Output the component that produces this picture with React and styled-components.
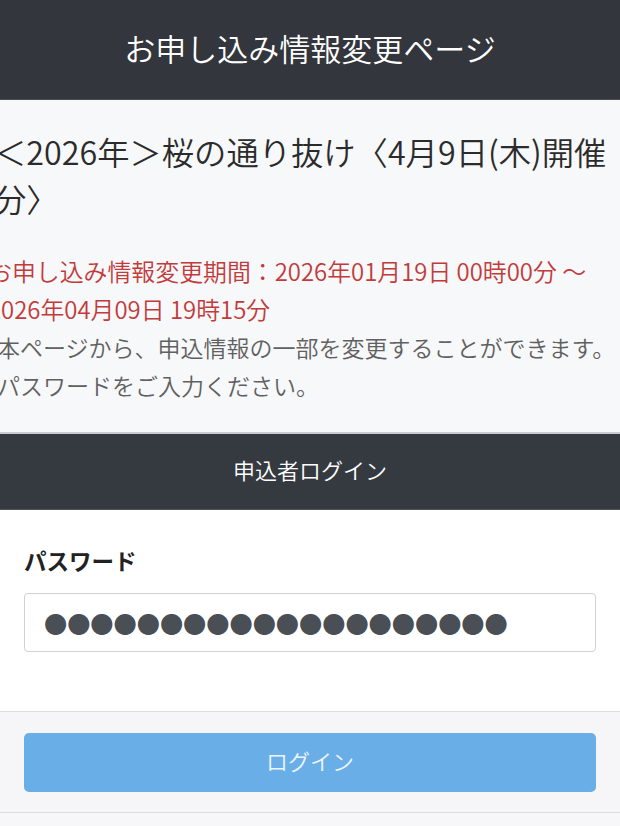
import React from "react";
import styled, { createGlobalStyle } from "styled-components";

const Global = createGlobalStyle`
  html, body { margin: 0; padding: 0; background: #ffffff; }
  body { font-family: "Noto Sans CJK JP", "Noto Sans", sans-serif; overflow: hidden; }
  * { box-sizing: border-box; }
`;

const Page = styled.div`
  width: 620px;
  min-height: 826px;
  display: flex;
  flex-direction: column;
  background: #f7f7f9;
`;

const Header = styled.header`
  height: 100px;
  background: #33363c;
  border-bottom: 1px solid #4a4d52;
  display: flex;
  align-items: center;
  justify-content: center;
  color: #ffffff;
  font-size: 31px;
  font-weight: 350;
  padding-bottom: 5px;
`;

const Info = styled.section`
  background: #f7f8fa;
  padding: 28px 0 28px 0;
`;

const InfoInner = styled.div`
  margin-left: ${(p) => p.$shift}px;
`;

const EventTitle = styled.h1`
  margin: 0 4px 0 0;
  font-size: 32.3px;
  font-weight: 350;
  line-height: 47px;
  color: #2b2b2b;
`;

const Period = styled.p`
  margin: 30px 0 0;
  font-size: 23.9px;
  font-weight: 350;
  line-height: 38px;
  color: #c23b3b;
`;

const Note = styled.p`
  margin: 0;
  font-size: 23px;
  font-weight: 350;
  line-height: 38px;
  color: #606060;
`;

const SectionBar = styled.div`
  height: 78px;
  background: #353a41;
  border-top: 2px solid #c9cbce;
  border-bottom: 1px solid #50545a;
  display: flex;
  align-items: center;
  justify-content: center;
  color: #ffffff;
  font-size: 22px;
  font-weight: 350;
  padding-bottom: 6px;
`;

const Form = styled.div`
  background: #ffffff;
  padding: 34px 24px 59px;
  display: flex;
  flex-direction: column;
  gap: 17px;
`;

const Label = styled.label`
  font-size: 22.5px;
  font-weight: 700;
  line-height: 32px;
  color: #222222;
`;

const PasswordBox = styled.input`
  height: 59px;
  width: 100%;
  border: 1px solid #cfd1d4;
  border-radius: 4px;
  background: #ffffff;
  padding: 0 0 0 19px;
  font-family: "Noto Sans CJK JP", sans-serif;
  font-size: 23.2px;
  color: #4a4e55;
  outline: none;
`;

const Footer = styled.div`
  background: #f6f6f8;
  border-top: 1px solid #dcdcdf;
  border-bottom: 1px solid #dcdcdf;
  padding: 21px 24px 20px;
`;

const Button = styled.button`
  width: 100%;
  height: 59px;
  border: none;
  border-radius: 5px;
  background: #6aaee7;
  color: #eef6fd;
  font-family: "Noto Sans CJK JP", sans-serif;
  font-size: 22px;
  font-weight: 350;
  display: flex;
  align-items: center;
  justify-content: center;
  padding: 0 0 5px;
`;

const Rest = styled.div`
  flex: 1;
  background: #f7f7f9;
`;

export default function App() {
  return (
    <>
      <Global />
      <Page>
        <Header>お申し込み情報変更ページ</Header>
        <Info>
          <InfoInner $shift={-6}>
            <EventTitle>＜2026年＞桜の通り抜け〈4月9日(木)開催分〉</EventTitle>
          </InfoInner>
          <InfoInner $shift={-12}>
            <Period>お申し込み情報変更期間：2026年01月19日 00時00分 〜 2026年04月09日 19時15分</Period>
          </InfoInner>
          <InfoInner $shift={-3}>
            <Note>本ページから、申込情報の一部を変更することができます。</Note>
            <Note>パスワードをご入力ください。</Note>
          </InfoInner>
        </Info>
        <SectionBar>申込者ログイン</SectionBar>
        <Form>
          <Label htmlFor="pw">パスワード</Label>
          <PasswordBox id="pw" type="text" readOnly value={"●".repeat(20)} />
        </Form>
        <Footer>
          <Button type="button">ログイン</Button>
        </Footer>
        <Rest />
      </Page>
    </>
  );
}
